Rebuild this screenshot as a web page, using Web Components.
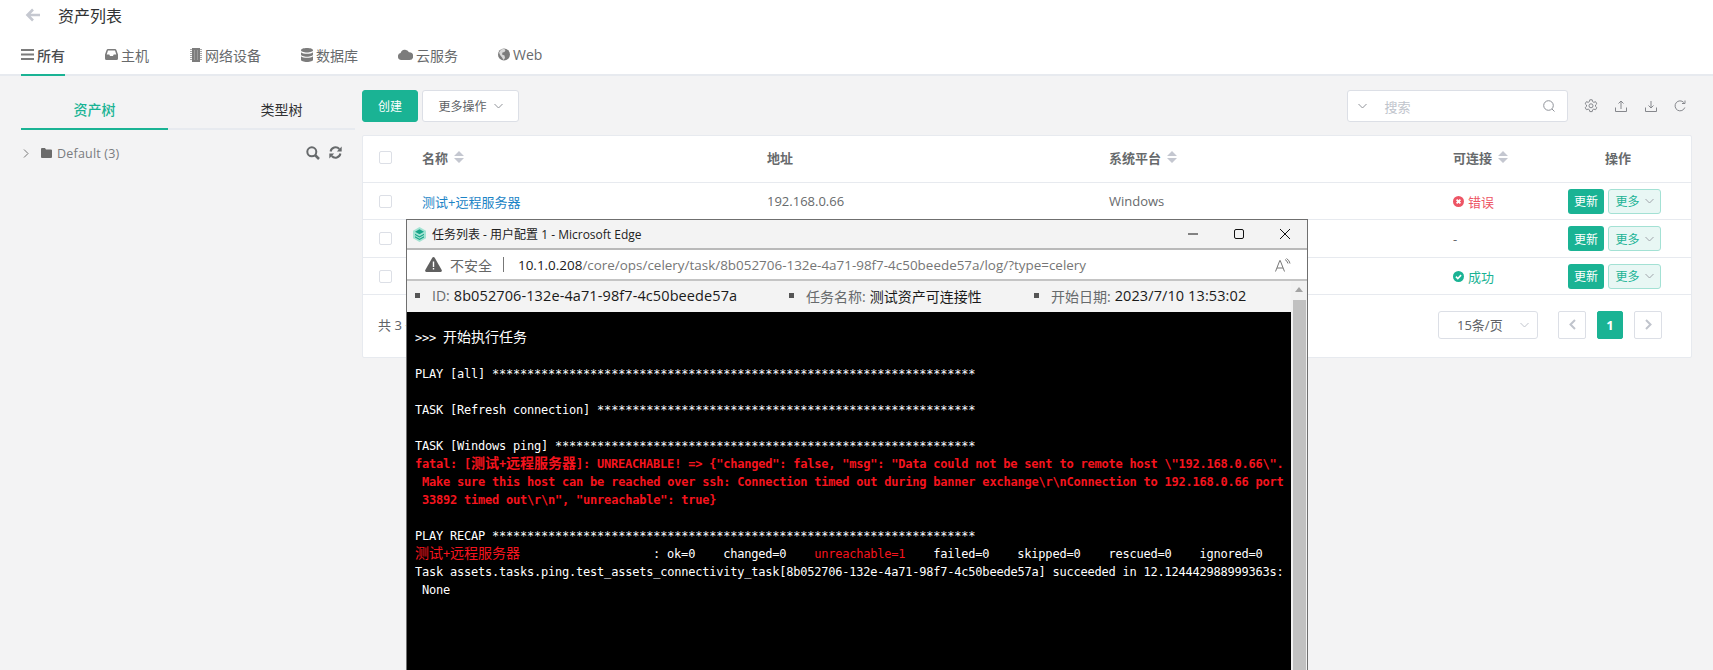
<!DOCTYPE html>
<html lang="zh-CN">

<head>
  <meta charset="UTF-8">
  <title>资产列表</title>
  <style>
    html, body {
      margin: 0;
      height: 670px;
      overflow: hidden;
      background: #f3f3f4;
      font-family: "Open Sans", "Noto Sans CJK SC", sans-serif;
      color: #676a6c;
    }
    body { position: relative; }
  </style>
</head>

<body>
  <asset-head></asset-head>
  <main-area>
    <tree-panel></tree-panel>
    <asset-list></asset-list>
  </main-area>
  <browser-window></browser-window>

  <script>
    // Shared icons
    const icons = {
      back: `<svg width="16" height="14" viewBox="0 0 16 14"><path d="M15 7H3M8 1.5 2.5 7 8 12.5" fill="none" stroke="#c5c8d0" stroke-width="2.6"/></svg>`,
      bars: `<svg width="13" height="11" viewBox="0 0 13 11"><path d="M0 0h13v2H0zM0 4.5h13v2H0zM0 9h13v2H0z" fill="#7c7c7c"/></svg>`,
      inbox: `<svg width="13" height="11" viewBox="0 0 13 11"><path d="M3 0h7q1 0 1.4 1L13 5.5V9.500q0 1.500-1.500 1.500h-10Q0 11 0 9.500V5.500L1.600 1Q2 0 3 0zM3 1.500 1.700 5.500H4.300L5 7H8L8.700 5.500H11.300L10 1.500z" fill="#7c7c7c" fill-rule="evenodd"/></svg>`,
      chip: `<svg width="12" height="14" viewBox="0 0 12 14"><path d="M2 0h8v14H2z" fill="#7c7c7c"/><path d="M0 1h2v1H0zM0 3h2v1H0zM0 5h2v1H0zM0 7h2v1H0zM0 9h2v1H0zM0 11h2v1H0zM10 1h2v1h-2zM10 3h2v1h-2zM10 5h2v1h-2zM10 7h2v1h-2zM10 9h2v1h-2zM10 11h2v1h-2z" fill="#a8a8a8"/><path d="M4 2h1v10H4zM7 2h1v10H7z" fill="#9a9a9a"/></svg>`,
      db: `<svg width="12" height="14" viewBox="0 0 12 14"><path d="M0 2.200C0 .9 2.700 0 6 0s6 .9 6 2.200S9.300 4.400 6 4.400 0 3.500 0 2.200zM0 4.200C1 5.300 3.500 5.800 6 5.800s5-.5 6-1.600v2.300C12 7.800 9.300 8.700 6 8.700S0 7.800 0 6.500zM0 8.200C1 9.300 3.500 9.800 6 9.800s5-.5 6-1.600v3.600C12 13.100 9.300 14 6 14s-6-.9-6-2.200z" fill="#7c7c7c"/></svg>`,
      cloud: `<svg width="15" height="11" viewBox="0 0 15 11"><path d="M3.500 11A3.500 3.500 0 0 1 2.600 4.100 4.500 4.500 0 0 1 11 3.200 3.900 3.900 0 0 1 11.500 11z" fill="#7c7c7c"/></svg>`,
      globe: `<svg width="12" height="13" viewBox="0 0 12 13"><circle cx="6" cy="6.500" r="6" fill="#7c7c7c"/><path d="M3 1.500 6 .8 7.500 2 6.500 4 4.500 4.500 4 6.500 6.500 7.500 7 10 5.500 12 4 9.500 2 7 1 4.500z" fill="#d8d8d8"/></svg>`,
      chevDown: `<svg width="9" height="6" viewBox="0 0 9 6"><path d="M.5 1 4.500 5 8.500 1" fill="none" stroke="currentColor" stroke-width="1"/></svg>`,
      chevRight: `<svg width="6" height="9" viewBox="0 0 6 9"><path d="M1 .5 5 4.500 1 8.500" fill="none" stroke="#777" stroke-width="1"/></svg>`,
      folder: `<svg width="11" height="10" viewBox="0 0 11 10"><path d="M1 0h3l1 1.500h5q1 0 1 1V9q0 1-1 1H1q-1 0-1-1V1q0-1 1-1z" fill="#6b6b6b"/></svg>`,
      faSearch: `<svg width="14" height="14" viewBox="0 0 14 14"><circle cx="5.800" cy="5.800" r="4.500" fill="none" stroke="#676a6c" stroke-width="2"/><path d="M9 9l4 4" stroke="#676a6c" stroke-width="2.500"/></svg>`,
      faRefresh: `<svg width="13" height="13" viewBox="0 0 13 13"><path d="M1.600 5.500A5 5 0 0 1 10.300 3" fill="none" stroke="#676a6c" stroke-width="2"/><path d="M12.700.6V5.500H7.800z" fill="#676a6c"/><path d="M11.400 7.500A5 5 0 0 1 2.700 10" fill="none" stroke="#676a6c" stroke-width="2"/><path d="M.3 12.400V7.500H5.200z" fill="#676a6c"/></svg>`,
      sort: `<svg width="10" height="12" viewBox="0 0 10 12"><path d="M5 0l5 5H0zM5 12 0 7h10z" fill="#c4c7d0"/></svg>`,
      search: `<svg width="12" height="12" viewBox="0 0 12 12"><circle cx="5.500" cy="5.500" r="4.800" fill="none" stroke="#8f9299" stroke-width="1"/><path d="M9 9l2.500 2.500" stroke="#8f9299" stroke-width="1"/></svg>`,
      gear: `<svg width="14" height="14" viewBox="0 0 14 14" fill="none" stroke="#85878c"><path d="M5.800 .8h2.400l.4 1.800 1.200.7 1.800-.6 1.200 2.100-1.300 1.200v1.400l1.300 1.200-1.200 2.100-1.800-.6-1.200.7-.4 1.800H5.800l-.4-1.800-1.200-.7-1.800.6L1.200 8.600l1.300-1.200V6L1.200 4.800l1.200-2.100 1.800.6 1.200-.7z"/><circle cx="7" cy="6.800" r="2"/></svg>`,
      upload: `<svg width="12" height="12" viewBox="0 0 12 12" fill="none" stroke="#85878c"><path d="M.5 7.500v4h11v-4M6 9V1M3.500 3.500 6 1l2.500 2.500"/></svg>`,
      download: `<svg width="12" height="12" viewBox="0 0 12 12" fill="none" stroke="#85878c"><path d="M.5 7.500v4h11v-4M6 1v7M3.500 5.500 6 8l2.500-2.500"/></svg>`,
      redo: `<svg width="12" height="12" viewBox="0 0 12 12" fill="none" stroke="#85878c"><path d="M10.800 7.500A5 5 0 1 1 9.800 2.500"/><path d="M11 .5v3H8" /></svg>`,
      error: `<svg width="11" height="11" viewBox="0 0 11 11"><circle cx="5.500" cy="5.500" r="5.500" fill="#ed5565"/><path d="M3.600 3.600l3.800 3.800M7.400 3.600 3.600 7.400" stroke="#fff" stroke-width="1.800"/></svg>`,
      ok: `<svg width="11" height="11" viewBox="0 0 11 11"><circle cx="5.500" cy="5.500" r="5.500" fill="#1ab394"/><path d="M2.900 5.600l1.900 1.900 3.300-3.400" fill="none" stroke="#fff" stroke-width="1.600"/></svg>`,
      caretLeft: `<svg width="7" height="11" viewBox="0 0 7 11"><path d="M6 1 1.500 5.500 6 10" fill="none" stroke="#c0c4cc" stroke-width="2"/></svg>`,
      caretRight: `<svg width="7" height="11" viewBox="0 0 7 11"><path d="M1 1l4.500 4.500L1 10" fill="none" stroke="#c0c4cc" stroke-width="2"/></svg>`,
      warn: `<svg width="17" height="15" viewBox="0 0 17 15"><path d="M8.500 0q.8 0 1.200.7l7 12.300q.7 1.500-1 2H1.300q-1.700-.5-1-2L7.300.7Q7.700 0 8.500 0z" fill="#5f5f5f"/><path d="M7.800 4.500h1.400v5.500H7.800zM7.800 11h1.400v1.500H7.800z" fill="#fff"/></svg>`,
      logo: `<svg width="13" height="15" viewBox="0 0 13 15"><path d="M6.500 0 13 3.700v7.600L6.500 15 0 11.300V3.700z" fill="#a5e3d3"/><path d="M6.500 2.300 11 4.800 6.500 7.300 2 4.800z" fill="#17a589"/><path d="M2 6.700 6.500 9.200 11 6.700v1.300L6.500 10.500 2 8z" fill="#17a589"/><path d="M2 9.200 6.500 11.700 11 9.200v1.200L6.500 12.900 2 10.400z" fill="#17a589"/></svg>`
    };

    class AssetHead extends HTMLElement {
      constructor() {
        super();
        this.attachShadow({ mode: 'open' });
        const tabs = [
          ['bars', '所有', 14], ['inbox', '主机', 40], ['chip', '网络设备', 41],
          ['db', '数据库', 40], ['cloud', '云服务', 40], ['globe', 'Web', 40]
        ];
        this.shadowRoot.innerHTML = `
          <style>
            :host { display: block; background: #fff; height: 74px; border-bottom: 2px solid #e7eaef; }
            .title { display: flex; align-items: center; height: 29px; padding-left: 25px; gap: 17px; font-size: 16px; color: #303133; }
            nav { display: flex; height: 45px; padding-left: 21px; }
            .tab { display: flex; align-items: center; gap: 3px; font-size: 14px; color: #676a6c; height: 47px; box-sizing: border-box; padding-top: 6px; border-bottom: 2px solid transparent; }
            .tab.on { border-bottom-color: #1ab394; color: #4a4c4e; font-weight: 500; }
            .tab svg { display: block; }
          </style>
          <div class="title">${icons.back}<span>资产列表</span></div>
          <nav>
            ${tabs.map(([icon, label, gap], i) => `<div class="tab ${i === 0 ? 'on' : ''}" style="margin-left:${i === 0 ? 0 : gap}px">${icons[icon]}<span>${label}</span></div>`).join('')}
          </nav>
        `;
      }
    }

    class MainArea extends HTMLElement {
      constructor() {
        super();
        this.attachShadow({ mode: 'open' });
        this.shadowRoot.innerHTML = `
          <style>
            :host { display: flex; padding: 14px 21px 0; gap: 7px; align-items: flex-start; }
          </style>
          <slot></slot>
        `;
      }
    }

    class TreePanel extends HTMLElement {
      constructor() {
        super();
        this.attachShadow({ mode: 'open' });
        this.shadowRoot.innerHTML = `
          <style>
            :host { display: block; width: 334px; flex: none; font-size: 14px; }
            .tabs { display: grid; grid-template-columns: 147px 1fr; height: 38px; border-bottom: 2px solid #e7eaef; }
            .t { display: flex; align-items: center; justify-content: center; color: #303133; margin-bottom: -2px; font-size: 14px; padding-bottom: 2px; }
            .t + .t { padding-left: 40px; }
            .t.on { color: #1ab394; border-bottom: 2px solid #1ab394; padding-bottom: 0; font-weight: 500; }
            .row { display: flex; align-items: center; height: 24px; margin-top: 11px; font-size: 12.500px; color: #7a7c7f; }
            .chev { margin-left: 2px; width: 18px; display: flex; }
            .name { margin-left: 5px; flex: 1; letter-spacing: .2px; }
            .tools { display: flex; gap: 9px; margin-right: 13px; }
            svg { display: block; }
          </style>
          <div class="tabs"><div class="t on">资产树</div><div class="t">类型树</div></div>
          <div class="row">
            <span class="chev">${icons.chevRight}</span>
            ${icons.folder}
            <span class="name">Default (3)</span>
            <span class="tools">${icons.faSearch}${icons.faRefresh}</span>
          </div>
        `;
      }
    }

    class AssetList extends HTMLElement {
      constructor() {
        super();
        this.attachShadow({ mode: 'open' });
        this.shadowRoot.innerHTML = `
          <style>
            :host { display: block; flex: 1; min-width: 0; font-size: 13px; }
            .bar { display: flex; align-items: center; gap: 4px; height: 32px; margin-bottom: 13px; }
            button { font: inherit; font-size: 12px; height: 32px; border-radius: 3px; box-sizing: border-box; display: flex; align-items: center; justify-content: center; }
            .create { width: 56px; background: #1ab394; color: #fff; border: 1px solid #1ab394; }
            .more { width: 97px; background: #fff; color: #606266; border: 1px solid #dcdfe6; gap: 7px; }
            .more svg { color: #909399; }
            .search { margin-left: auto; display: flex; align-items: center; width: 221px; height: 32px; box-sizing: border-box; background: #fff; border: 1px solid #dcdfe6; border-radius: 3px; padding: 0 12px 0 10px; color: #c0c4cc; }
            .search span { margin-left: 18px; flex: 1; }
            .search svg { color: #909399; }
            .ops { display: flex; align-items: center; gap: 17.500px; margin: 0 6px 0 12px; }
            .ops svg { display: block; }
            .card { background: #fff; border: 1px solid #e7eaef; border-radius: 2px; }
          </style>
          <div class="bar">
            <button class="create">创建</button>
            <button class="more">更多操作 ${icons.chevDown}</button>
            <div class="search">${icons.chevDown}<span>搜索</span>${icons.search}</div>
            <div class="ops">${icons.gear}${icons.upload}${icons.download}${icons.redo}</div>
          </div>
          <div class="card">
            <asset-row head style="height:47px;padding-bottom:4px"></asset-row>
            <asset-row name="测试+远程服务器" addr="192.168.0.66" platform="Windows" status="error" style="height:37px"></asset-row>
            <asset-row status="none" style="height:38px"></asset-row>
            <asset-row status="ok" style="height:37px"></asset-row>
            <table-pager></table-pager>
          </div>
        `;
      }
    }

    class AssetRow extends HTMLElement {
      constructor() {
        super();
        this.attachShadow({ mode: 'open' });
      }

      connectedCallback() {
        const isHead = this.hasAttribute('head');
        const status = this.getAttribute('status');
        let statusCell = '';
        if (status === 'error') statusCell = `<span class="st err">${icons.error}错误</span>`;
        if (status === 'ok') statusCell = `<span class="st good">${icons.ok}成功</span>`;
        if (status === 'none') statusCell = '-';

        const th = (label) => `<span class="th">${label}${icons.sort}</span>`;
        const cells = isHead
          ? [th('名称'), '<span class="th">地址</span>', th('系统平台'), th('可连接'), '<span class="th act">操作</span>']
          : [`<a>${this.getAttribute('name') || ''}</a>`, this.getAttribute('addr') || '', this.getAttribute('platform') || '', statusCell,
             `<span class="btns"><b>更新</b><i>更多 ${icons.chevDown}</i></span>`];

        this.shadowRoot.innerHTML = `
          <style>
            :host { display: grid; grid-template-columns: 59px 345px 342px 344px 115px 1fr; align-items: center; box-sizing: border-box; border-bottom: 1px solid #e7eaef; color: #676a6c; font-size: 13px; }
            .box { margin-left: 16px; width: 13px; height: 13px; box-sizing: border-box; background: #fff; border: 1px solid #dcdfe6; border-radius: 2px; }
            a { color: #1c84c6; }
            .th { display: flex; align-items: center; gap: 6px; font-weight: 600; }
            .act { margin-left: 37px; }
            .st { display: flex; align-items: center; gap: 4px; }
            .err { color: #ed5565; }
            .good { color: #1ab394; }
            .btns { display: flex; gap: 4px; }
            b, i { display: flex; align-items: center; justify-content: center; height: 25px; box-sizing: border-box; border-radius: 3px; font-size: 12px; font-weight: 400; font-style: normal; }
            b { width: 36px; background: #1ab394; color: #fff; }
            i { width: 53px; background: #e8f7f4; color: #1ab394; border: 1px solid #a3e1d4; gap: 5px; }
            i svg { color: #a0a4ab; }
          </style>
          <span class="box"></span>
          ${cells.map((c) => `<div>${c}</div>`).join('')}
        `;
      }
    }

    class TablePager extends HTMLElement {
      constructor() {
        super();
        this.attachShadow({ mode: 'open' });
        this.shadowRoot.innerHTML = `
          <style>
            :host { display: flex; align-items: center; height: 62px; box-sizing: border-box; padding: 0 29px 3px 15px; font-size: 13px; color: #606266; }
            .total { flex: 1; }
            .size { display: flex; align-items: center; justify-content: space-between; box-sizing: border-box; width: 100px; height: 28px; border: 1px solid #dcdfe6; border-radius: 3px; padding: 0 8px 0 18px; margin-right: 20px; color: #606266; }
            .size svg { color: #c0c4cc; }
            .p { display: flex; align-items: center; justify-content: center; box-sizing: border-box; width: 28px; height: 28px; border: 1px solid #dcdfe6; border-radius: 2px; background: #fff; }
            .on { width: 26px; margin: 0 11px; background: #1ab394; border-color: #1ab394; color: #fff; font-weight: 700; }
          </style>
          <span class="total">共 3 条</span>
          <span class="size">15条/页 ${icons.chevDown}</span>
          <span class="p">${icons.caretLeft}</span>
          <span class="p on">1</span>
          <span class="p">${icons.caretRight}</span>
        `;
      }
    }

    class BrowserWindow extends HTMLElement {
      constructor() {
        super();
        this.attachShadow({ mode: 'open' });
        this.shadowRoot.innerHTML = `
          <style>
            :host { display: flex; flex-direction: column; position: absolute; left: 406px; top: 219px; width: 902px; height: 460px; box-sizing: border-box; border: 1px solid #6f6f6f; background: #f3f3f3; color: #333; }
            svg { display: block; flex: none; }
            .title { display: flex; align-items: center; height: 28px; padding: 0 0 0 6px; gap: 6px; font-size: 12px; border-bottom: 2px solid #b9b9b9; flex: none; }
            .title span { flex: 1; color: #222; }
            .ctl { display: flex; margin-right: 17px; gap: 36px; align-items: center; }
            .addr { display: flex; align-items: center; height: 29px; background: #fff; border-bottom: 2px solid #c4c4c4; padding-left: 18px; font-size: 14px; flex: none; color: #666; }
            .addr .warn { margin-right: 8px; }
            .addr .sep { width: 1px; height: 15px; background: #777; margin: 0 14px 0 11px; }
            .addr .url { flex: 1; color: #767676; white-space: nowrap; font-size: 13.440px; }
            .addr .url em { font-style: normal; color: #1a1a1a; }
            .addr .read { margin-right: 16px; }
            .body { display: flex; flex: 1; min-height: 0; }
            .page { flex: 1; min-width: 0; display: flex; flex-direction: column; }
            .info { display: flex; align-items: center; height: 31px; padding: 0 0 2px 8px; box-sizing: border-box; font-size: 14px; color: #676a6c; flex: none; white-space: nowrap; }
            .info div { display: flex; align-items: center; }
            .info div::before { content: ""; width: 5px; height: 5px; background: #555; margin-right: 12px; }
            .info em { font-style: normal; color: #1a1a1a; margin-left: 4px; }
            .info .w { font-size: 14.500px; letter-spacing: .1px; }
            .bar { width: 16px; flex: none; background: #f1f1f1; display: flex; flex-direction: column; align-items: center; padding-top: 6px; box-sizing: border-box; }
            .arrow { width: 0; height: 0; border: 4px solid transparent; border-bottom: 5px solid #a3a3a3; border-top: 0; }
            .thumb { width: 13px; flex: 1; background: #c1c1c1; margin-top: 8px; }
          </style>
          <div class="title">
            ${icons.logo}<span>任务列表 - 用户配置 1 - Microsoft Edge</span>
            <div class="ctl">
              <svg width="10" height="10" viewBox="0 0 10 10"><path d="M0 5h10" stroke="#111"/></svg>
              <svg width="10" height="10" viewBox="0 0 10 10"><rect x=".5" y=".5" width="9" height="9" rx="1.500" fill="none" stroke="#111"/></svg>
              <svg width="10" height="10" viewBox="0 0 10 10"><path d="M0 0l10 10M10 0 0 10" stroke="#111"/></svg>
            </div>
          </div>
          <div class="addr">
            <span class="warn">${icons.warn}</span><span>不安全</span><span class="sep"></span>
            <span class="url"><em>10.1.0.208</em>/core/ops/celery/task/8b052706-132e-4a71-98f7-4c50beede57a/log/?type=celery</span>
            <svg class="read" width="16" height="14" viewBox="0 0 16 14" fill="none" stroke="#777"><path d="M.5 13.500 4.800 2.500h.4L9.500 13.500M2 10h6"/><path d="M10 1.500q2.500 1.500 3 4M11.500 .5q3 1.800 3.500 5"/></svg>
          </div>
          <div class="body">
            <div class="page">
              <div class="info">
                <div style="width:374px">ID:<em class="w">8b052706-132e-4a71-98f7-4c50beede57a</em></div>
                <div style="width:245px">任务名称:<em>测试资产可连接性</em></div>
                <div>开始日期:<em class="w">2023/7/10 13:53:02</em></div>
              </div>
              <task-console></task-console>
            </div>
            <div class="bar"><span class="arrow"></span><span class="thumb"></span></div>
          </div>
        `;
      }
    }

    class TaskConsole extends HTMLElement {
      constructor() {
        super();
        this.attachShadow({ mode: 'open' });
        const stars = (n) => '*'.repeat(n);
        const host = '<span class="z">测试</span>+<span class="z">远程服务器</span>';
        this.shadowRoot.innerHTML = `
          <style>
            :host { display: block; flex: 1; background: #000; color: #fff; overflow: hidden; padding: 17px 0 0 8px; }
            pre { margin: 0; font-family: "DejaVu Sans Mono", monospace; font-size: 12px; line-height: 18px; letter-spacing: -.22px; font-kerning: none; }
            .z { font-family: "Noto Sans CJK SC", sans-serif; font-size: 14px; letter-spacing: 0; line-height: 0; }
            .r { color: #f5141e; }
            .f { font-weight: 700; }
          </style>
<pre>&gt;&gt;&gt; <span class="z">开始执行任务</span>

PLAY [all] ${stars(69)}

TASK [Refresh connection] ${stars(54)}

TASK [Windows ping] ${stars(60)}
<span class="r f">fatal: [${host}]: UNREACHABLE! =&gt; {"changed": false, "msg": "Data could not be sent to remote host \\"192.168.0.66\\".
 Make sure this host can be reached over ssh: Connection timed out during banner exchange\\r\\nConnection to 192.168.0.66 port
 33892 timed out\\r\\n", "unreachable": true}</span>

PLAY RECAP ${stars(69)}
<span class="r">${host}</span>                   : ok=0    changed=0    <span class="r">unreachable=1</span>    failed=0    skipped=0    rescued=0    ignored=0
Task assets.tasks.ping.test_assets_connectivity_task[8b052706-132e-4a71-98f7-4c50beede57a] succeeded in 12.124442988999363s:
 None</pre>
        `;
      }
    }

    customElements.define('asset-head', AssetHead);
    customElements.define('main-area', MainArea);
    customElements.define('tree-panel', TreePanel);
    customElements.define('asset-list', AssetList);
    customElements.define('asset-row', AssetRow);
    customElements.define('table-pager', TablePager);
    customElements.define('browser-window', BrowserWindow);
    customElements.define('task-console', TaskConsole);
  </script>
</body>

</html>
